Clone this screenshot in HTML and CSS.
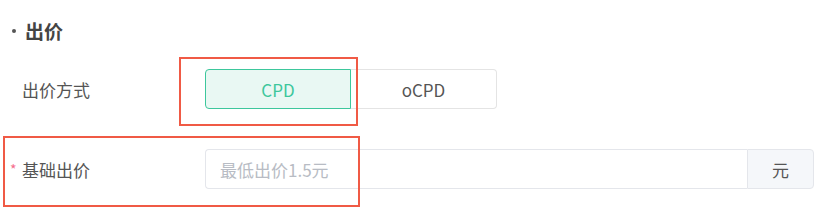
FILE: index.html
```html
<!DOCTYPE html>
<html lang="zh-CN">
<head>
<meta charset="utf-8">
<link rel="stylesheet" href="styles.css">
</head>
<body>
<div class="panel">
  <div class="title"><span class="dot"></span><span>出价</span></div>
  <div class="form">
    <div class="row">
      <div class="label"><span class="star"></span>出价方式</div>
      <div class="seg">
        <button class="seg-btn active">CPD</button>
        <button class="seg-btn">oCPD</button>
      </div>
    </div>
    <div class="row">
      <div class="label"><span class="star">*</span>基础出价</div>
      <div class="input-group">
        <input class="input" type="text" placeholder="最低出价1.5元">
        <div class="addon">元</div>
      </div>
    </div>
  </div>
  <div class="mark mark-1"></div>
  <div class="mark mark-2"></div>
</div>
</body>
</html>
```

FILE: styles.css
```css
* { box-sizing: border-box; }
html, body { margin: 0; padding: 0; background: #fff; }
body {
  font-family: "Noto Sans CJK SC", "Noto Sans", sans-serif;
  color: #555;
}
.panel {
  position: relative;
  width: 831px;
  height: 216px;
  padding-top: 18px;
}
.title {
  display: flex;
  align-items: center;
  height: 24px;
  padding-left: 12px;
  font-size: 19px;
  font-weight: bold;
  color: #444;
}
.title .dot {
  width: 4px;
  height: 4px;
  border-radius: 50%;
  background: #555;
  margin-right: 9px;
  margin-top: 2px;
}
.form {
  margin-top: 27px;
  display: flex;
  flex-direction: column;
  gap: 40px;
  padding-left: 10px;
}
.row {
  display: flex;
  align-items: center;
  height: 40px;
}
.label {
  width: 195px;
  display: flex;
  align-items: center;
  font-size: 17px;
  color: #555;
}
.star {
  width: 12px;
  color: #f56c8c;
  font-size: 14px;
}
.seg { display: flex; }
.seg-btn {
  width: 146px;
  height: 40px;
  margin: 0;
  font-family: inherit;
  font-size: 17px;
  color: #555;
  background: #fff;
  border: 1px solid #e4e4e4;
  border-left: none;
  border-radius: 0 4px 4px 0;
  padding: 0;
}
.seg-btn.active {
  color: #3dc79c;
  background: #e9f8f3;
  border: 1px solid #3dc79c;
  border-radius: 4px 0 0 4px;
}
.input-group {
  display: flex;
  width: 609px;
  height: 40px;
}
.input {
  flex: 1;
  min-width: 0;
  height: 40px;
  margin: 0;
  padding: 0 14px;
  font-family: inherit;
  font-size: 17px;
  color: #555;
  border: 1px solid #e4e6eb;
  border-right: none;
  border-radius: 4px 0 0 4px;
  outline: none;
}
.input::placeholder { color: #b8bcc4; }
.addon {
  width: 67px;
  display: flex;
  align-items: center;
  justify-content: center;
  font-size: 17px;
  color: #555;
  background: #f5f7fa;
  border: 1px solid #e4e6eb;
  border-radius: 0 4px 4px 0;
}
.mark {
  position: absolute;
  border: 2px solid #f05a45;
}
.mark-1 { left: 179px; top: 57px; width: 179px; height: 69px; }
.mark-2 { left: 3px; top: 136px; width: 357px; height: 71px; }
```
